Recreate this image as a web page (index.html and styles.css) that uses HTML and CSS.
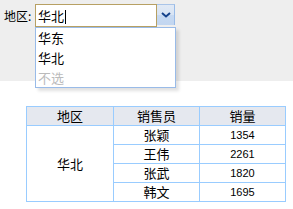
FILE: index.html
```html
<!DOCTYPE html>
<html lang="zh">
<head>
<meta charset="UTF-8">
<title>销量</title>
<link rel="stylesheet" href="styles.css">
</head>
<body>
    <div class="filter-bar">
        <label class="filter-label">地区:</label>
        <div class="combo">
            <div class="combo-input">华北<span class="caret"></span></div>
            <div class="combo-btn">
                <svg width="10" height="6" viewBox="0 0 10 6"><path d="M1 1 L5 4.5 L9 1" fill="none" stroke="#15428b" stroke-width="2"/></svg>
            </div>
            <div class="combo-list">
                <div class="combo-item">华东</div>
                <div class="combo-item">华北</div>
                <div class="combo-item empty">不选</div>
            </div>
        </div>
    </div>
    <table class="sales">
        <colgroup>
            <col class="col-a">
            <col class="col-b">
            <col class="col-c">
        </colgroup>
        <tr>
            <th>地区</th>
            <th>销售员</th>
            <th>销量</th>
        </tr>
        <tr>
            <td rowspan="4">华北</td>
            <td>张颖</td>
            <td class="num">1354</td>
        </tr>
        <tr>
            <td>王伟</td>
            <td class="num">2261</td>
        </tr>
        <tr>
            <td>张武</td>
            <td class="num">1820</td>
        </tr>
        <tr>
            <td>韩文</td>
            <td class="num">1695</td>
        </tr>
    </table>
</body>
</html>
```

FILE: styles.css
```css
body {
    margin: 0;
    background-color: #fff;
    color: #000;
    font-family: "Noto Sans CJK SC", "Liberation Sans", sans-serif;
    font-size: 12px;
}
.filter-bar {
    background-color: #eeeeee;
    height: 81px;
    display: flex;
    align-items: flex-start;
    padding: 4px 0 0 4px;
    box-sizing: border-box;
}
.filter-label {
    width: 31px;
    line-height: 23px;
}
.combo {
    position: relative;
    display: flex;
}
.combo-input {
    width: 118px;
    height: 21px;
    line-height: 21px;
    border: 1px solid #b7a063;
    background-color: #fff;
    padding-left: 2px;
    font-size: 13px;
}
.caret {
    display: inline-block;
    width: 1px;
    height: 14px;
    background-color: #000;
    vertical-align: middle;
    margin-left: 1px;
}
.combo-btn {
    width: 17px;
    height: 20px;
    border-top: 1px solid #a9c4e8;
    border-right: 1px solid #99bbe8;
    background: linear-gradient(#e1e9f5 0%, #d8e4f4 50%, #c6d9f2 50%, #c2d6f0 100%);
    display: flex;
    align-items: center;
    justify-content: center;
}
.combo-list {
    position: absolute;
    left: 0;
    top: 23px;
    width: 139px;
    height: 59px;
    border: 1px solid #99bbe8;
    background-color: #fff;
    box-shadow: 3px 3px 3px rgba(0, 0, 0, .12);
}
.combo-item {
    height: 20px;
    line-height: 20px;
    padding-left: 2px;
    font-size: 13px;
}
.combo-item.empty {
    color: #bbbbbb;
}
.sales {
    border-collapse: collapse;
    table-layout: fixed;
    margin: 25px 0 0 26px;
    width: 260px;
}
.col-a {
    width: 87px;
}
.col-b, .col-c {
    width: 86px;
}
.sales th, .sales td {
    border: 1px solid #99ccff;
    height: 18px;
    padding: 0;
    text-align: center;
    font-weight: normal;
    line-height: 18px;
    font-size: 13px;
}
.sales th {
    background-color: #e5e8ef;
}
.sales td.num {
    font-family: "Liberation Sans", sans-serif;
    font-size: 11px;
}
```
